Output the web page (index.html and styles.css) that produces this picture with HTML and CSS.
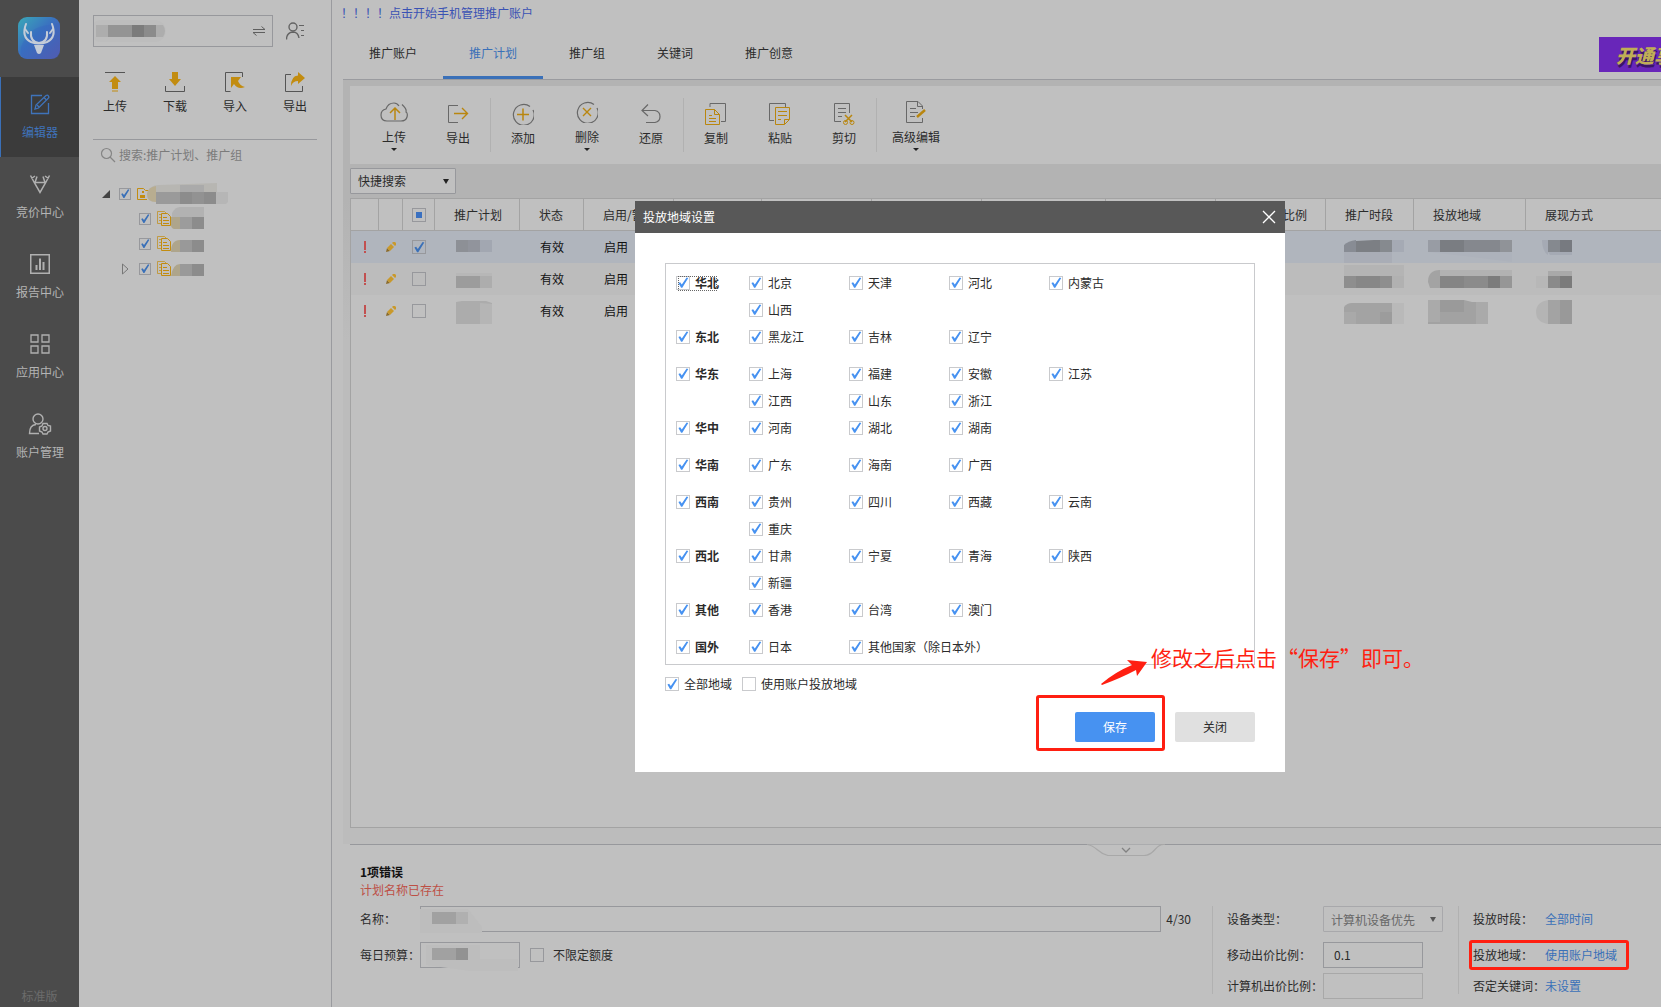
FILE: index.html
```html
<!DOCTYPE html>
<html lang="zh-CN">
<head>
<meta charset="utf-8">
<title>推广编辑器</title>
<link rel="stylesheet" href="styles.css">
</head>
<body>
<div class="app">
  <nav class="rail">
    <div class="logo">
      <svg width="42" height="42" viewBox="0 0 42 42">
        <defs><linearGradient id="lg" x1="0" y1="0" x2="1" y2="1"><stop offset="0" stop-color="#3aa9b8"/><stop offset=".45" stop-color="#3a72c0"/><stop offset="1" stop-color="#5f56a8"/></linearGradient></defs>
        <rect width="42" height="42" rx="9" fill="url(#lg)"/>
        <path d="M3 30Q10 12 25 9T42 6V33Q42 42 33 42H9Q2 42 3 30Z" fill="#3763c0" opacity=".35"/>
        <g fill="none" stroke="#c4ccd8" stroke-width="2" stroke-linecap="round">
          <path d="M8 7Q3 20 13 25Q21 28 29 25Q39 20 34 7"/><path d="M13 15Q12 25 21 26Q30 25 29 15"/><path d="M7 12l3 4M35 12l-3 4"/>
        </g>
        <path d="M16 28h10l-3 8q-2 2-4 0z" fill="#c4ccd8"/>
      </svg>
    </div>
    <a class="rail-item active" href="#">
      <svg width="22" height="22" viewBox="0 0 22 22" fill="none" stroke="#3f73ba" stroke-width="1.3"><path d="M13 2.500H2.500V20.500H19.500V10"/><path d="M6 16l1-4L17 2.500q1.500-1 2.500.500t-.500 2.500L9.500 15z"/><path d="M15 4.500l2.500 2.500M8 12l2 2"/></svg>
      <span>编辑器</span></a>
    <a class="rail-item" href="#">
      <svg width="22" height="22" viewBox="0 0 22 22" fill="none" stroke="#b0b0b0" stroke-width="1.500"><path d="M1.500 2.500L5.500 10L11 19.500L16.500 10L20.500 2.500M2.500 5.500L6 3M19.500 5.500L16 3M8 3.500L6 9.500H16L14 3.500"/></svg>
      <span>竞价中心</span></a>
    <a class="rail-item" href="#">
      <svg width="22" height="22" viewBox="0 0 22 22" fill="none" stroke="#b0b0b0" stroke-width="1.500"><rect x="1.750" y="1.750" width="18.500" height="18.500"/><path d="M7.500 17v-5M11 17V5.500M14.500 17V9" stroke-width="2"/></svg>
      <span>报告中心</span></a>
    <a class="rail-item" href="#">
      <svg width="22" height="22" viewBox="0 0 22 22" fill="none" stroke="#b0b0b0" stroke-width="1.300"><path d="M2 2h7v7H2zM13 2h7v7h-7zM2 13h7v7H2zM13 13h7v7h-7z"/></svg>
      <span>应用中心</span></a>
    <a class="rail-item" href="#">
      <svg width="24" height="22" viewBox="0 0 24 22" fill="none" stroke="#b0b0b0" stroke-width="1.400"><circle cx="10" cy="6" r="5"/><path d="M11 20.500H1.500Q1.500 12 8 11.500"/><path d="M15 10.500h4l1 2 2.500.500v5l-2.500 1-1 2h-4l-1-2-2.500-1v-4l2.500-1z"/><circle cx="17" cy="15.500" r="2"/></svg>
      <span>账户管理</span></a>
    <span class="edition">标准版</span>
  </nav>

  <aside class="tree-panel">
    <div class="account">
      <div class="account-box">
        <svg width="80" height="24" viewBox="0 0 80 24"><rect x="-4" y="1" width="76" height="22" rx="11" fill="#bdbdbd"/><path d="M2 6h12v12H2z" fill="#adadad"/><path d="M14 6h24v12H14z" fill="#949494"/><path d="M38 6h12v12H38z" fill="#7b7b7b"/><path d="M50 6h12v12H50z" fill="#8b8b8b"/><path d="M62 6h7q4 6 0 12h-7z" fill="#adadad"/></svg>
        <svg width="14" height="12" viewBox="0 0 14 12" fill="none" stroke="#5f5f5f"><path d="M1 4.500h12L9.500 1.500M13 7.500H1L4.500 10.500"/></svg>
      </div>
      <svg width="20" height="18" viewBox="0 0 20 18" fill="none" stroke="#636363" stroke-width="1.400"><circle cx="7" cy="5" r="4"/><path d="M.500 17.500Q.500 10.500 7 10Q12 10 13 16"/><path d="M13 3.500h5M15 8.500h3M15 13.500h3" stroke-width="1.200"/></svg>
    </div>
    <div class="quick">
      <button type="button"><svg width="20" height="20" viewBox="0 0 20 20"><path d="M0 .500h20" stroke="#555"/><path d="M10 4l6 6h-3v7H7v-7H4zM7 18.500h6v1H7z" fill="#c28c10"/></svg>上传</button>
      <button type="button"><svg width="20" height="20" viewBox="0 0 20 20"><path d="M.500 14v5.500h19V14" stroke="#555" fill="none"/><path d="M7 0h6v7h3l-6 7-6-7h3z" fill="#c28c10"/></svg>下载</button>
      <button type="button"><svg width="20" height="20" viewBox="0 0 20 20"><path d="M17.500 5V.500H.500v19h5" stroke="#555" fill="none"/><path d="M6 5h10l-3 4q2 5 7 6-7 3-11-3l-3 4z" fill="#c28c10"/></svg>导入</button>
      <button type="button"><svg width="20" height="20" viewBox="0 0 20 20"><path d="M6 2.500H.500v17h17V14" stroke="#555" fill="none"/><path d="M13 0l7 6-7 6V9Q8 9 6 14 6 4 13 3.500z" fill="#c28c10"/></svg>导出</button>
    </div>
    <div class="search">
      <svg width="16" height="16" viewBox="0 0 16 16" fill="none" stroke="#858585" stroke-width="1.200"><circle cx="6.500" cy="6.500" r="5"/><path d="M10 10l5 5"/></svg>
      <input type="text" placeholder="搜索:推广计划、推广组" aria-label="搜索">
    </div>
    <ul class="tree">
      <li><span class="twist"><svg width="8" height="8"><path d="M8 0v8H0z" fill="#444"/></svg></span>
        <input type="checkbox" class="sm" checked aria-label="账户">
        <svg width="92" height="24" viewBox="0 0 92 24"><path d="M.500 6.500h6l2 2h10M.500 6.500v11H10" fill="none" stroke="#c28c10"/><path d="M5 9h2v2H5zM3 13h5v3H3z" fill="#c28c10"/><path d="M10 12Q12 3 22 3L80 1v18H24Q10 22 10 12Z" fill="#b7b6b2"/><path d="M10 12q1-7 9-8v16Q10 20 10 12z" fill="#b8ad90"/><path d="M19 10h24v12H19z" fill="#9a9a9a"/><path d="M43 3h24v7H43z" fill="#aaa"/><path d="M43 10h12v12H43zM67 10h12v12H67z" fill="#8c8c8c"/><path d="M55 10h12v12H55z" fill="#929292"/><path d="M79 10h12v10l-2 2H79z" fill="#b6b6b6"/></svg></li>
      <li class="child"><span class="twist"></span><input type="checkbox" class="sm" checked aria-label="计划一">
        <svg width="48" height="24" viewBox="0 0 48 24"><use href="#doc"/><path d="M15 6q3-6 8-6h24v10H15z" fill="#b2b2b2"/><path d="M14 10h9v12h-6q-3-1-3-4z" fill="#aea58c"/><path d="M23 10h12v12H23z" fill="#9c9c9c"/><path d="M35 10h12v12H35z" fill="#8c8c8c"/></svg></li>
      <li class="child"><span class="twist"></span><input type="checkbox" class="sm" checked aria-label="计划二">
        <svg width="48" height="24" viewBox="0 0 48 24"><use href="#doc"/><path d="M14 20q0-12 9-12v12z" fill="#aea58c"/><path d="M23 8h12v12H23z" fill="#999"/><path d="M35 8h12v12H35z" fill="#8c8c8c"/></svg></li>
      <li class="child"><span class="twist"><svg width="7" height="12" viewBox="0 0 7 12"><path d="M.500 1v10L6 6z" fill="none" stroke="#777"/></svg></span><input type="checkbox" class="sm" checked aria-label="计划三">
        <svg width="48" height="24" viewBox="0 0 48 24"><use href="#doc"/><path d="M14 19q2-12 9-12v12z" fill="#aea58c"/><path d="M23 7h12v12H23z" fill="#999"/><path d="M35 7h12v12H35z" fill="#8c8c8c"/></svg></li>
    </ul>
    <svg class="defs" width="0" height="0"><defs>
      <g id="doc" fill="none" stroke="#c28c10"><path d="M4 16.500H.500v-12h7l2 2M2 7.500h2M2 10.500h2M2 13.500h2" opacity=".7"/><path d="M4.500 6.500h6l3 3v9h-9zM6 10.500h4M6 13.500h6M6 16.500h6"/></g>
      <g id="pencil"><path d="M0 10l1-4 3 3z" fill="#8a6a2a"/><path d="M1 6L5 2l3 3-4 4z" fill="#c9992b"/><path d="M6 1l1-1h2l1 1v2L9 4z" fill="#c9992b"/></g>
    </defs></svg>
  </aside>

  <main class="main">
    <a class="notice" href="#">！！！！点击开始手机管理推广账户</a>
    <div class="tabbar">
      <a href="#">推广账户</a><a href="#" class="on">推广计划</a><a href="#">推广组</a><a href="#">关键词</a><a href="#">推广创意</a>
      <div class="banner">开通享</div>
    </div>
    <div class="work">
      <div class="toolbar">
        <button type="button" class="drop"><svg width="28" height="22" viewBox="0 0 28 22" fill="none" stroke="#686868" stroke-width="1.200"><path d="M22 3.500Q27 8 26 11q2 1 1 5-1 4-6 4H7Q1 20 1 14 1 9 6 8 8 2 14 2q3 0 5 3" /><path d="M15 19V7M10 12l5-5 5 5" stroke="#b9860f" stroke-width="1.500"/></svg>上传</button>
        <button type="button"><svg width="24" height="22" viewBox="0 0 24 22" fill="none" stroke="#686868"><path d="M12 2.500H2.500v17H12"/><path d="M8 10.500h13M16 5l5.500 5.500L16 16" stroke="#b9860f" stroke-width="1.400"/></svg>导出</button>
        <i class="sep"></i>
        <button type="button"><svg width="22" height="22" viewBox="0 0 22 22" fill="none" stroke="#686868" stroke-width="1.200"><path d="M18 3.500A10.400 10.400 0 1 0 21 7"/><path d="M11 5.500v12M5 11.500h12" stroke="#b9860f" stroke-width="1.500"/></svg>添加</button>
        <button type="button" class="drop"><svg width="22" height="22" viewBox="0 0 22 22" fill="none" stroke="#686868" stroke-width="1.200"><path d="M18 3.500A10.400 10.400 0 1 0 21 7"/><path d="M7 7l8 8M15 7l-8 8" stroke="#b9860f" stroke-width="1.400"/></svg>删除</button>
        <button type="button"><svg width="22" height="22" viewBox="0 0 22 22" fill="none" stroke="#686868" stroke-width="1.200"><path d="M8 1.500L2 7.500L8 13M2 7.500h13q5 1 5 6t-5 6H6"/></svg>还原</button>
        <i class="sep"></i>
        <button type="button"><svg width="22" height="22" viewBox="0 0 22 22" fill="none" stroke="#686868"><path d="M5 4V.500h15.500v18H16"/><path d="M.500 6.500h9l5 5v10H.500zM9.500 6.500v5h5M4 12.500h3M4 15.500h7M4 18.500h7" stroke="#b9860f"/></svg>复制</button>
        <button type="button"><svg width="22" height="22" viewBox="0 0 22 22" fill="none" stroke="#686868"><path d="M16.500 4V.500H.500v17H5"/><path d="M6.500 4.500h14v12l-5 5h-9zM20 16.500h-4.500v5M9 8.500h9M9 12.500h9M9 16.500h3" stroke="#b9860f"/></svg>粘贴</button>
        <button type="button"><svg width="22" height="22" viewBox="0 0 22 22" fill="none" stroke="#686868"><path d="M16.500 10V.500H1.500v18H8M5 5.500h8M5 9.500h8M5 13.500h4"/><path d="M12 12l7 7M19 12l-7 7" stroke="#b9860f" stroke-width="1.500"/><circle cx="12.500" cy="19.500" r="2" stroke="#b9860f"/><circle cx="19" cy="19.500" r="2" stroke="#b9860f"/></svg>剪切</button>
        <i class="sep"></i>
        <button type="button" class="drop wide"><svg width="22" height="22" viewBox="0 0 22 22" fill="none" stroke="#686868"><path d="M17.500 8V5L13 .500H1.500v21h16V17M12.500 1v4.500h5M5 7.500h6M5 11.500h8M5 15.500h5"/><path d="M12 16l8-7" stroke="#b9860f" stroke-width="2.500"/></svg>高级编辑</button>
      </div>
      <div class="picker"><select aria-label="快捷搜索"><option>快捷搜索</option></select></div>
      <div class="grid">
        <table>
          <colgroup><col class="c-err"><col class="c-edit"><col class="c-check"><col class="c-plan"><col class="c-state"><col class="c-90"><col class="c-88"><col class="c-110"><col class="c-110"><col class="c-124"><col class="c-110"><col class="c-110"><col class="c-88"><col class="c-area"><col></colgroup>
          <thead><tr><th></th><th></th><th class="mid"><input type="checkbox" class="some" aria-label="全选"></th><th>推广计划</th><th>状态</th><th>启用/暂停</th><th></th><th></th><th></th><th></th><th></th><th>移动出价比例</th><th>推广时段</th><th>投放地域</th><th>展现方式</th></tr></thead>
          <tbody>
            <tr class="sel"><td class="mid"><b class="bang"></b></td><td class="mid"><svg width="10" height="10"><use href="#pencil"/></svg></td><td class="mid"><input type="checkbox" checked aria-label="选择"></td>
              <td class="blk"><svg width="84" height="32"><path d="M21 9h12v12H21z" fill="#8d9096"/><path d="M33 9h12v12H33z" fill="#91949c"/><path d="M45 9h12v12H45z" fill="#a2a7b1"/></svg></td><td>有效</td><td>启用</td><td></td><td></td><td></td><td></td><td></td><td></td>
              <td class="blk"><svg width="87" height="32"><path d="M18 21h48v11H18z" fill="#a9adb6"/><path d="M18 21V14q4-4 12-5v12z" fill="#888c94"/><path d="M30 10L48 9h18v12H30z" fill="#7c7f84"/><path d="M54 9h12v12H54z" fill="#868a8f"/><path d="M66 9h12v12H66z" fill="#a5aab4"/></svg></td>
              <td class="blk"><svg width="111" height="32"><path d="M14 21h84v10L50 25z" fill="#adb2bb"/><path d="M14 9h12v12H14z" fill="#989ca4"/><path d="M26 9h24v12H26z" fill="#7a7d82"/><path d="M50 9h36v12H50z" fill="#85888e"/><path d="M86 9h12v12H86z" fill="#909398"/></svg></td>
              <td class="blk"><svg width="80" height="32"><path d="M16 9h6v15Q16 20 16 9z" fill="#a5aab4"/><path d="M22 21h24v3H24z" fill="#a5aab4"/><path d="M22 9h12v12H22z" fill="#85898f"/><path d="M34 9h12v12H34z" fill="#777a80"/></svg></td></tr>
            <tr class="alt"><td class="mid"><b class="bang"></b></td><td class="mid"><svg width="10" height="10"><use href="#pencil"/></svg></td><td class="mid"><input type="checkbox" aria-label="选择"></td>
              <td class="blk"><svg width="84" height="32"><path d="M21 10h36v3H21z" fill="#b7b7b7"/><path d="M21 13h24v12H21z" fill="#9c9c9c"/><path d="M45 13h12v12H45z" fill="#adadad"/></svg></td><td>有效</td><td>启用</td><td></td><td></td><td></td><td></td><td></td><td></td>
              <td class="blk"><svg width="87" height="32"><path d="M18 2h60v11H18z" fill="#b4b4b4"/><path d="M18 13h48v12H18z" fill="#8e8e8e"/><path d="M30 13h24v12H30z" fill="#878787"/><path d="M66 13h12v12H66z" fill="#b1b1b1"/></svg></td>
              <td class="blk"><svg width="111" height="32"><path d="M26 7h72v6H20z" fill="#b2b2b2"/><path d="M14 19q0-12 12-12v18H16z" fill="#a3a3a3"/><path d="M26 13h24v12H26z" fill="#858585"/><path d="M50 13h36v12H50z" fill="#8b8b8b"/><path d="M74 13h12v12H74z" fill="#7c7c7c"/><path d="M86 13h12v12H86z" fill="#969696"/></svg></td>
              <td class="blk"><svg width="80" height="32"><path d="M10 13h12v12H10z" fill="#b7b7b7"/><path d="M22 8h24v5H22z" fill="#a9a9a9"/><path d="M22 13h12v12H22z" fill="#8a8a8a"/><path d="M34 13h12v12H34z" fill="#7b7b7b"/></svg></td></tr>
            <tr><td class="mid"><b class="bang"></b></td><td class="mid"><svg width="10" height="10"><use href="#pencil"/></svg></td><td class="mid"><input type="checkbox" aria-label="选择"></td>
              <td class="blk"><svg width="84" height="32"><path d="M21 7l6-1h24l6 2v21H21z" fill="#acacac"/><path d="M45 8l12 1v20H45z" fill="#b5b5b5"/></svg></td><td>有效</td><td>启用</td><td></td><td></td><td></td><td></td><td></td><td></td>
              <td class="blk"><svg width="87" height="32"><path d="M66 8h12v21H66z" fill="#b9b9b9"/><path d="M18 29V12q3-4 8-4h40v21z" fill="#a3a3a3"/><path d="M18 17h12v12H18z" fill="#a9a9a9"/><path d="M54 17h12v12H54z" fill="#9c9c9c"/></svg></td>
              <td class="blk"><svg width="111" height="32"><path d="M14 5h36l8 2h16v22H14z" fill="#a2a2a2"/><path d="M14 5h12v22H14z" fill="#aaa"/><path d="M26 5h24v12H26z" fill="#9a9a9a"/><path d="M62 7h12v22H62z" fill="#aaa"/></svg></td>
              <td class="blk"><svg width="80" height="32"><path d="M22 5v24q-12-2-12-12T22 5z" fill="#b4b4b4"/><path d="M22 5h12v24H22z" fill="#a3a3a3"/><path d="M34 5h12v24H34z" fill="#999"/></svg></td></tr>
          </tbody>
        </table>
      </div>
    </div>

    <section class="detail">
      <svg class="handle" width="78" height="12" viewBox="0 0 78 12" fill="none"><path d="M0 .500Q5 1 10 5.500t11 6h36q6 0 11-6T78 .500" fill="#c0c0c0" stroke="#a8a8a8" stroke-width="1.200"/><path d="M35 4l4 4 4-4" stroke="#828282" stroke-width="1.300"/></svg>
      <strong>1项错误</strong>
      <p class="error">计划名称已存在</p>
      <div class="form">
        <div class="basic">
          <div class="line"><label for="nm">名称：</label><div class="fake-wrap"><input id="nm" type="text"><svg class="smudge" width="66" height="30"><path d="M0 3h48l14 18v6H0z" fill="#bdbdbd"/><path d="M12 6h24v12H12z" fill="#a1a1a1"/><path d="M36 6h12v12H36z" fill="#b0b0b0"/></svg></div><span class="count">4/30</span></div>
          <div class="line"><label for="bg">每日预算：</label><div class="fake-wrap budget"><input id="bg" type="text"><svg class="smudge" width="98" height="30"><path d="M6 3h54v14h38v12H50L6 23z" fill="#bdbdbd"/><path d="M12 6h24v12H12z" fill="#a1a1a1"/><path d="M36 6h12v12H36z" fill="#929292"/></svg></div><label class="tick"><input type="checkbox">不限定额度</label></div>
        </div>
        <div class="device">
          <label for="dv">设备类型：</label><div class="picker muted"><select id="dv"><option>计算机设备优先</option></select></div>
          <label for="mb">移动出价比例：</label><input id="mb" type="text" value="0.1">
          <label for="pc">计算机出价比例：</label><input id="pc" type="text" class="off">
        </div>
        <div class="scope">
          <span>投放时段：</span><a href="#">全部时间</a>
          <span>投放地域：</span><a href="#" class="area-link">使用账户地域</a>
          <span>否定关键词：</span><a href="#">未设置</a>
          <i class="mark mark-area"></i>
        </div>
      </div>
    </section>
  </main>
</div>

<div class="dialog" role="dialog" aria-label="投放地域设置">
  <header><span>投放地域设置</span><button type="button" aria-label="关闭窗口"><svg width="14" height="14" viewBox="0 0 14 14"><path d="M1 1l12 12M13 1L1 13" stroke="#fff" stroke-width="1.300"/></svg></button></header>
  <div class="dialog-body">
    <div class="regions">
      <div class="region"><label class="tick focus"><input type="checkbox" checked>华北</label><div class="places"><label class="tick"><input type="checkbox" checked>北京</label><label class="tick"><input type="checkbox" checked>天津</label><label class="tick"><input type="checkbox" checked>河北</label><label class="tick"><input type="checkbox" checked>内蒙古</label><label class="tick"><input type="checkbox" checked>山西</label></div></div>
      <div class="region"><label class="tick"><input type="checkbox" checked>东北</label><div class="places"><label class="tick"><input type="checkbox" checked>黑龙江</label><label class="tick"><input type="checkbox" checked>吉林</label><label class="tick"><input type="checkbox" checked>辽宁</label></div></div>
      <div class="region"><label class="tick"><input type="checkbox" checked>华东</label><div class="places"><label class="tick"><input type="checkbox" checked>上海</label><label class="tick"><input type="checkbox" checked>福建</label><label class="tick"><input type="checkbox" checked>安徽</label><label class="tick"><input type="checkbox" checked>江苏</label><label class="tick"><input type="checkbox" checked>江西</label><label class="tick"><input type="checkbox" checked>山东</label><label class="tick"><input type="checkbox" checked>浙江</label></div></div>
      <div class="region"><label class="tick"><input type="checkbox" checked>华中</label><div class="places"><label class="tick"><input type="checkbox" checked>河南</label><label class="tick"><input type="checkbox" checked>湖北</label><label class="tick"><input type="checkbox" checked>湖南</label></div></div>
      <div class="region"><label class="tick"><input type="checkbox" checked>华南</label><div class="places"><label class="tick"><input type="checkbox" checked>广东</label><label class="tick"><input type="checkbox" checked>海南</label><label class="tick"><input type="checkbox" checked>广西</label></div></div>
      <div class="region"><label class="tick"><input type="checkbox" checked>西南</label><div class="places"><label class="tick"><input type="checkbox" checked>贵州</label><label class="tick"><input type="checkbox" checked>四川</label><label class="tick"><input type="checkbox" checked>西藏</label><label class="tick"><input type="checkbox" checked>云南</label><label class="tick"><input type="checkbox" checked>重庆</label></div></div>
      <div class="region"><label class="tick"><input type="checkbox" checked>西北</label><div class="places"><label class="tick"><input type="checkbox" checked>甘肃</label><label class="tick"><input type="checkbox" checked>宁夏</label><label class="tick"><input type="checkbox" checked>青海</label><label class="tick"><input type="checkbox" checked>陕西</label><label class="tick"><input type="checkbox" checked>新疆</label></div></div>
      <div class="region"><label class="tick"><input type="checkbox" checked>其他</label><div class="places"><label class="tick"><input type="checkbox" checked>香港</label><label class="tick"><input type="checkbox" checked>台湾</label><label class="tick"><input type="checkbox" checked>澳门</label></div></div>
      <div class="region"><label class="tick"><input type="checkbox" checked>国外</label><div class="places"><label class="tick"><input type="checkbox" checked>日本</label><label class="tick"><input type="checkbox" checked>其他国家（除日本外）</label></div></div>
    </div>
    <div class="global"><label class="tick"><input type="checkbox" checked>全部地域</label><label class="tick"><input type="checkbox">使用账户投放地域</label></div>
    <div class="buttons"><button type="button" class="primary">保存</button><button type="button">关闭</button></div>
  </div>
  <i class="mark mark-save"></i>
  <svg class="arrow" width="48" height="28" viewBox="0 0 48 28"><path d="M0 25Q14 13 31 6L26 1L46 3L36 17L35 11Q20 19 1 26z" fill="#ff1f11"/></svg>
  <div class="hint">修改之后点击“保存”即可。</div>
</div>
</body>
</html>
```
FILE: styles.css
```css
* { box-sizing: border-box; }
body { margin: 0; background: #c0c0c0; color: #2b2b2b; font: 12px/16px "Noto Sans CJK SC", sans-serif; }
a { text-decoration: none; color: #3a70b8; }
button { font: inherit; color: inherit; border: 0; background: none; padding: 0; }
input, select { font: inherit; color: inherit; margin: 0; }
svg { display: block; flex: none; }
ul { list-style: none; margin: 0; padding: 0; }
.defs { position: absolute; }

.app { display: flex; min-height: 100vh; overflow: hidden; }

/* check boxes */
input[type="checkbox"] { appearance: none; flex: none; display: block; width: 14px; height: 14px; border: 1px solid #97989c; background: transparent; }
input[type="checkbox"].sm { width: 12px; height: 12px; }
input[type="checkbox"]:checked::before { content: ""; display: block; width: 100%; height: 100%; background: #3a70b8; clip-path: polygon(12% 54%, 26% 48%, 40% 66%, 80% 8%, 94% 12%, 44% 94%, 34% 94%); }
input.some::before { content: ""; display: block; width: 6px; height: 6px; margin: 3px; background: #3a70c0; }
.tick { display: flex; align-items: center; gap: 5px; white-space: nowrap; }

/* left rail */
.rail { width: 79px; flex: none; background: #4b4b4b; display: flex; flex-direction: column; }
.logo { height: 77px; padding: 17px 0 0 18px; }
.rail-item { height: 80px; padding-top: 16px; display: flex; flex-direction: column; align-items: center; gap: 9px; color: #b4b4b4; border-left: 1px solid transparent; }
.rail-item.active { background: #3b3b3b; color: #3f73ba; border-color: #3a70b8; }
.edition { margin-top: auto; padding-bottom: 3px; text-align: center; color: #6c6c6c; }

/* tree panel */
.tree-panel { width: 253px; flex: none; padding: 15px 14px 0; border-right: 1px solid #9a9b9f; }
.account { display: flex; align-items: center; gap: 13px; }
.account-box { width: 180px; height: 32px; border: 1px solid #97989c; padding-right: 6px; display: flex; align-items: center; justify-content: space-between; }
.quick { display: flex; margin: 25px 0 25px -8px; }
.quick button { width: 60px; display: flex; flex-direction: column; align-items: center; gap: 6px; flex: none; }
.search { border-top: 1px solid #97989c; height: 31px; padding-left: 7px; display: flex; align-items: center; gap: 3px; }
.search input { flex: 1; min-width: 0; border: 0; background: none; padding: 0; }
.search input::placeholder { color: #7b7b7b; opacity: 1; }
.tree { padding: 11px 0 0 9px; }
.tree li { display: flex; align-items: center; height: 25px; }
.tree li > svg { margin-left: 6px; }
.twist { width: 17px; flex: none; }
.tree .child { padding-left: 20px; }

/* main area */
.main { flex: 1; min-width: 0; display: flex; flex-direction: column; }
.notice { padding: 5px 0 0 9px; color: #3a52b4; }
.tabbar { display: flex; height: 59px; border-bottom: 1px solid #9a9b9f; margin-left: 11px; }
.tabbar a { padding: 24px 26px 0; color: #2b2b2b; }
.tabbar .on { color: #3a70b8; border-bottom: 3px solid #3a70b8; }
.banner { margin: 16px 0 0 auto; width: 62px; height: 35px; padding-left: 17px; background: #6826b9; color: #bfae55; font-size: 19px; line-height: 35px; font-weight: 900; font-style: italic; text-shadow: 1px 3px 0 #3a1468; white-space: nowrap; overflow: hidden; }
.work { flex: 1; display: flex; flex-direction: column; background: linear-gradient(#b3b3b3 120px, #bcbcbc 260px); margin-left: 11px; padding: 6px 0 0 7px; }
.toolbar { height: 78px; background: #c0c0c0; padding-left: 12px; display: flex; align-items: center; }
.toolbar button { width: 64px; height: 54px; display: flex; flex-direction: column; align-items: center; padding-top: 5px; gap: 5px; position: relative; }
.toolbar .drop { padding-top: 3px; gap: 6px; }
.toolbar .wide { width: 78px; }
.toolbar .drop::after { content: ""; position: absolute; bottom: 1px; border: 3px solid transparent; border-top-color: #222; border-bottom: 0; }
.sep { width: 1px; height: 54px; background: #b1b1b1; }
.picker { position: relative; width: 106px; height: 26px; margin: 4px 0; }
.picker select { appearance: none; width: 100%; height: 26px; border: 1px solid #97989c; border-radius: 1px; background: #c0c0c0; padding: 0 7px; }
.picker::after { content: ""; position: absolute; right: 7px; top: 11px; border: 3px solid transparent; border-top: 5px solid #222; border-bottom: 0; pointer-events: none; }
.grid { flex: 1; border: 1px solid #a3a3a3; border-right: 0; background: #c0c0c0; }
table { width: 100%; border-collapse: separate; border-spacing: 0; table-layout: fixed; }
th { height: 32px; padding: 0 0 0 19px; text-align: left; font-weight: 400; border-right: 1px solid #a3a3a3; border-bottom: 1px solid #a3a3a3; white-space: nowrap; overflow: hidden; }
th:last-child { border-right: 0; }
td { height: 32px; padding: 0 0 0 20px; color: #111; }
.blk { padding: 0; }
.sel { background: #b0b5bd; }
.alt { background: #bcbcbc; }
.mid { padding: 0; }
.mid > * { margin: 0 auto; }
td.mid input, th.mid input { margin: 0 auto; }
.bang { display: block; width: 2px; height: 12px; background: linear-gradient(#c25050 9px, transparent 9px, transparent 10px, #c25050 10px); }
.c-err { width: 28px; } .c-edit { width: 24px; } .c-check { width: 32px; } .c-plan { width: 85px; } .c-state { width: 64px; }
.c-90 { width: 90px; } .c-88 { width: 88px; } .c-110 { width: 110px; } .c-124 { width: 124px; } .c-area { width: 112px; }

/* detail form */
.detail { position: relative; margin: 16px 0 0 18px; border-top: 1px solid #97989c; padding: 19px 0 13px 10px; }
.detail::before { content: ""; position: absolute; left: -7px; right: 0; top: -17px; height: 16px; background: #bcbcbc; }
.handle { position: absolute; left: 737px; top: -1px; }
.detail strong { display: block; color: #111; font-size: 12px; }
.error { margin: 2px 0 8px; color: #bd4f45; }
.form { display: flex; }
.basic { flex: 1; min-width: 0; padding-right: 21px; }
.line { display: flex; align-items: center; height: 26px; margin-bottom: 10px; }
.line > label:first-child { width: 60px; flex: none; white-space: nowrap; }
.form input[type="text"] { width: 100%; height: 26px; border: 1px solid #97989c; background: transparent; padding: 0 10px; }
.fake-wrap { position: relative; flex: 1; }
.budget { flex: 0 0 100px; margin-right: 10px; }
.smudge { position: absolute; left: 0; top: 0; }
.count { padding-left: 5px; }
.line .tick { gap: 9px; }
.device { width: 246px; flex: none; height: 88px; border-left: 1px solid #b1b1b1; padding-left: 14px; display: grid; grid-template-columns: 96px 120px; grid-template-rows: 36px 31px 26px; align-items: start; line-height: 26px; white-space: nowrap; }
.device .picker { width: 120px; margin: 0; }
.device .picker select { color: #686868; background: transparent; border-color: #a8a8ab; }
.muted::after { border-top-color: #555; }
.device input[type="text"] { width: 100px; }
.device input[type="text"].off { border-color: #a8a8a8; }
.scope { position: relative; width: 203px; flex: none; height: 88px; border-left: 1px solid #b1b1b1; padding-left: 14px; display: grid; grid-template-columns: 72px 1fr; grid-template-rows: 36px 31px 26px; line-height: 26px; white-space: nowrap; }
.mark { position: absolute; border: 3px solid #ff1f11; border-radius: 3px; pointer-events: none; }
.mark-area { left: 10px; top: 34px; width: 160px; height: 30px; }

/* region dialog */
.dialog { position: absolute; left: 635px; top: 201px; width: 650px; background: #fff; }
.dialog header { height: 32px; background: #585858; color: #fff; display: flex; align-items: center; justify-content: space-between; padding: 0 9px 0 8px; }
.dialog input[type="checkbox"] { border-color: #c9cacd; }
.dialog input[type="checkbox"]:checked::before { background: #4792f1; }
.dialog-body { padding: 30px; }
.regions { border: 1px solid #c9cacd; padding: 5px 0 4px 10px; }
.region { display: flex; min-height: 37px; }
.region:last-child { min-height: 27px; }
.region > .tick { width: 73px; height: 27px; flex: none; font-weight: 700; position: relative; }
.focus::after { content: ""; position: absolute; left: 2px; top: 7px; width: 37px; height: 13px; border: 1px dotted #666; }
.places { display: grid; grid-template-columns: repeat(4, 100px); grid-auto-rows: 27px; align-content: start; }
.global { display: flex; gap: 10px; margin-top: 10px; height: 18px; }
.buttons { display: flex; justify-content: flex-end; gap: 20px; margin-top: 19px; }
.buttons button { width: 80px; height: 30px; border-radius: 2px; background: #e0e0e0; }
.buttons .primary { background: #4792f1; color: #fff; }
.mark-save { left: 401px; top: 494px; width: 129px; height: 56px; }
.arrow { position: absolute; left: 466px; top: 458px; }
.hint { position: absolute; left: 516px; top: 440px; font-size: 21px; line-height: 32px; color: #ff1f11; white-space: nowrap; }
```
